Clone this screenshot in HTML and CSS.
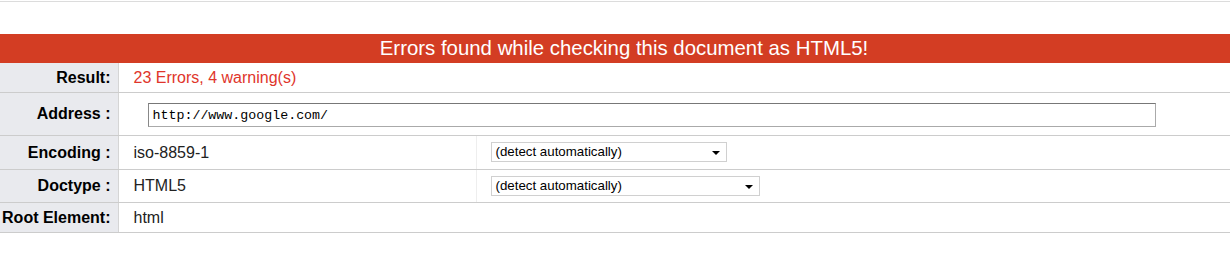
FILE: index.html
```html
<!DOCTYPE html>
<html lang="en">
<head>
  <meta charset="UTF-8" />
  <title>Validation Result</title>
  <link rel="stylesheet" href="styles.css">
</head>
<body>
  <div class="topline"></div>

  <h2 class="banner">Errors found while checking this document as HTML5!</h2>

  <table class="result-table">
    <tr class="row-result">
      <th>Result:</th>
      <td colspan="2" class="invalid">23 Errors, 4 warning(s)</td>
    </tr>
    <tr class="row-address">
      <th>Address :</th>
      <td colspan="2"><input type="text" class="uri" value="http://www.google.com/"></td>
    </tr>
    <tr class="row-encoding">
      <th>Encoding :</th>
      <td class="value">iso-8859-1</td>
      <td class="override">
        <div class="select small">(detect automatically)<span class="arrow"></span></div>
      </td>
    </tr>
    <tr class="row-doctype">
      <th>Doctype :</th>
      <td class="value">HTML5</td>
      <td class="override">
        <div class="select wide">(detect automatically)<span class="arrow"></span></div>
      </td>
    </tr>
    <tr class="row-root">
      <th>Root Element:</th>
      <td colspan="2">html</td>
    </tr>
  </table>
</body>
</html>
```

FILE: styles.css
```css
* {
  box-sizing: border-box;
}

body {
  margin: 0;
  background: #fff;
  font-family: "Liberation Sans", Arial, sans-serif;
  color: #000;
}

.topline {
  margin-top: 1px;
  height: 1px;
  background: #dcdcdc;
}

.banner {
  margin: 32px 0 0;
  height: 29px;
  line-height: 29px;
  padding-left: 18px;
  background: #d33d23;
  color: #fff;
  font-size: 20.4px;
  font-weight: normal;
  text-align: center;
}

.result-table {
  width: 100%;
  border-collapse: collapse;
}

.result-table th,
.result-table td {
  padding: 1px 0 0;
  border-bottom: 1px solid #cccccc;
  font-size: 16px;
  vertical-align: middle;
}

.result-table th {
  width: 118px;
  padding-right: 7px;
  text-align: right;
  font-weight: bold;
  background: #e9eaee;
  border-right: 1px solid #d5d5d5;
  color: #000;
}

.result-table td {
  padding-left: 15px;
  color: #222;
}

.result-table .invalid {
  color: #e0352b;
}

.row-result th, .row-result td { height: 29px; }
.row-address th, .row-address td { height: 43px; }
.row-encoding th, .row-encoding td { height: 34px; }
.row-doctype th, .row-doctype td { height: 33px; }
.row-root th, .row-root td { height: 30px; }

.row-address td {
  padding-left: 29px;
}

.uri {
  display: block;
  width: 1008px;
  height: 24px;
  margin-top: 2px;
  padding: 0 4px;
  border: 1px solid #aaa;
  border-top-color: #777;
  border-left-color: #888;
  font-family: "Liberation Mono", "Courier New", monospace;
  font-size: 13.3px;
  color: #000;
  background: #fff;
}

.result-table td.value {
  width: 358px;
  border-right: 1px solid #eeeeee;
}

.result-table td.override {
  padding-left: 14px;
  padding-top: 0;
}

.select {
  position: relative;
  height: 20px;
  line-height: 18px;
  padding-left: 4px;
  border: 1px solid #d0d0d0;
  font-size: 13.3px;
  color: #000;
  background: #fff;
}

.select.small { width: 236px; }
.select.wide { width: 269px; }

.arrow {
  position: absolute;
  right: 6px;
  top: 8px;
  width: 0;
  height: 0;
  border-left: 4px solid transparent;
  border-right: 4px solid transparent;
  border-top: 4px solid #000;
}
```
